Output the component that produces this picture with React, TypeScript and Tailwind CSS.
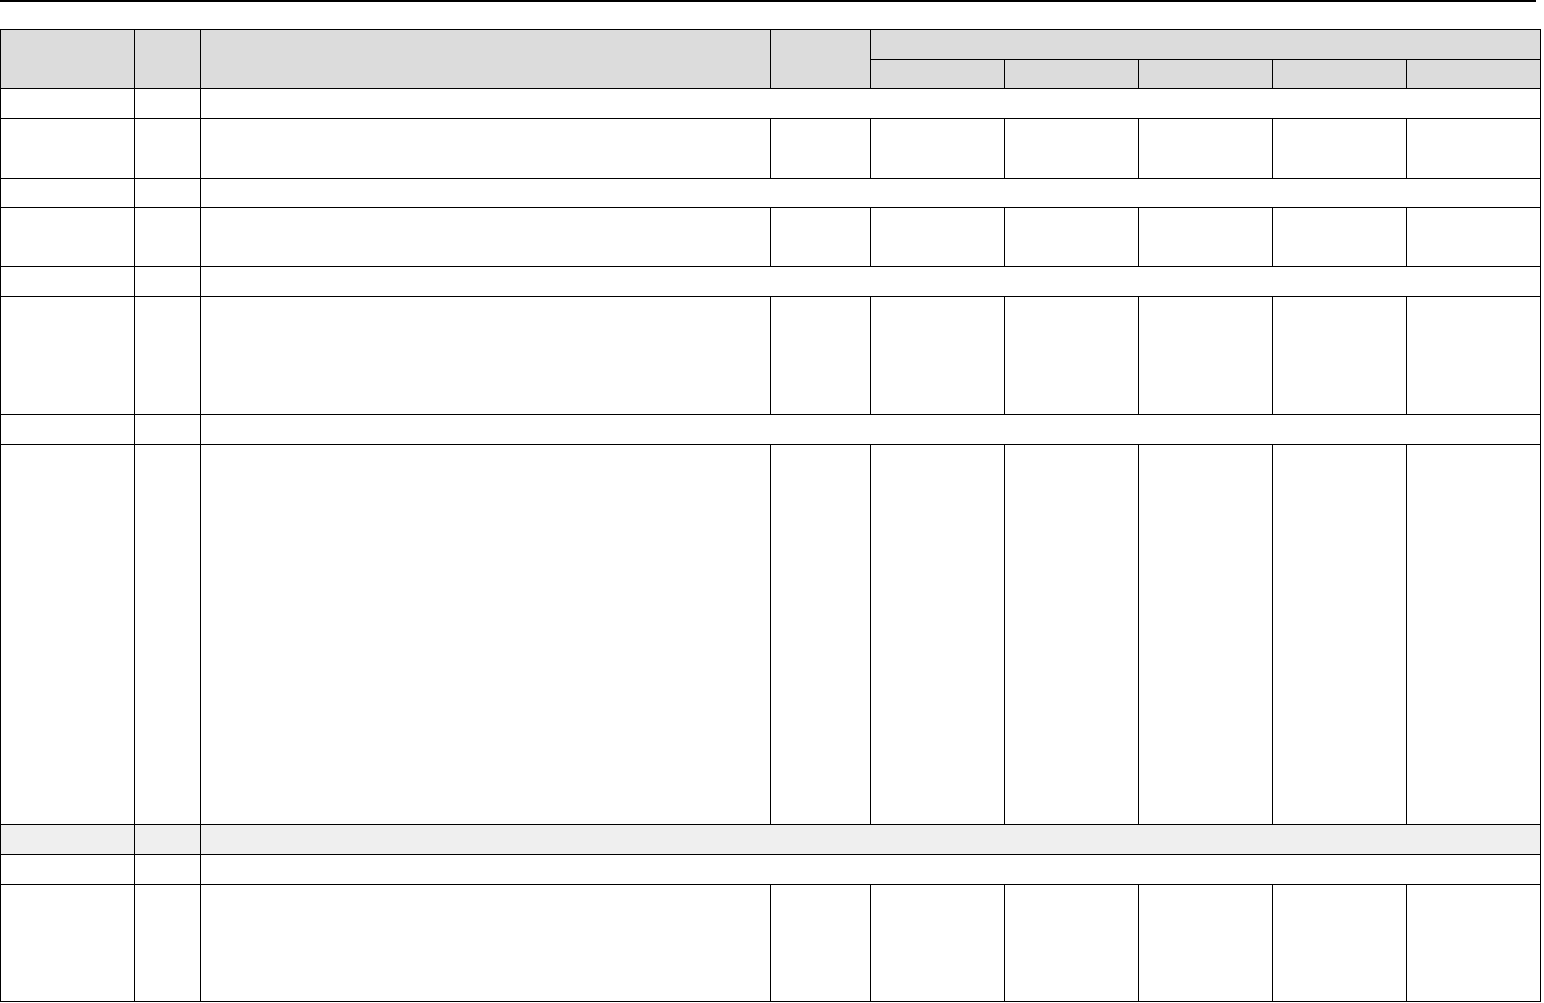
import React from "react";

type Row = { kind: "group" | "data"; h: string; shade?: boolean };

const rows: Row[] = [
  { kind: "group", h: "h-[30px]" },
  { kind: "data", h: "h-[60px]" },
  { kind: "group", h: "h-[29px]" },
  { kind: "data", h: "h-[59px]" },
  { kind: "group", h: "h-[30px]" },
  { kind: "data", h: "h-[118px]" },
  { kind: "group", h: "h-[30px]" },
  { kind: "data", h: "h-[380px]" },
  { kind: "group", h: "h-[30px]", shade: true },
  { kind: "group", h: "h-[30px]" },
  { kind: "data", h: "h-[117px]" },
];

const cell = "border-l border-t border-black";

export default function App() {
  return (
    <div className="w-[1544px] bg-white font-['Liberation_Sans',sans-serif]">
      <div className="h-[2px] w-[1536px] bg-black" />
      <div className="mt-[27px] grid w-[1541px] grid-cols-[134px_66px_570px_100px_134px_134px_134px_134px_134px] border-r border-b border-black">
        {/* header */}
        <div className={`${cell} row-span-2 bg-[#dcdcdc]`} />
        <div className={`${cell} row-span-2 bg-[#dcdcdc]`} />
        <div className={`${cell} row-span-2 bg-[#dcdcdc]`} />
        <div className={`${cell} row-span-2 bg-[#dcdcdc]`} />
        <div className={`${cell} col-span-5 h-[30px] bg-[#dcdcdc]`} />
        <div className={`${cell} h-[29px] bg-[#dcdcdc]`} />
        <div className={`${cell} h-[29px] bg-[#dcdcdc]`} />
        <div className={`${cell} h-[29px] bg-[#dcdcdc]`} />
        <div className={`${cell} h-[29px] bg-[#dcdcdc]`} />
        <div className={`${cell} h-[29px] bg-[#dcdcdc]`} />

        {rows.map((r, i) =>
          r.kind === "group" ? (
            <React.Fragment key={i}>
              <div className={`${cell} ${r.h} ${r.shade ? "bg-[#efefef]" : ""}`} />
              <div className={`${cell} ${r.h} ${r.shade ? "bg-[#efefef]" : ""}`} />
              <div className={`${cell} ${r.h} col-span-7 ${r.shade ? "bg-[#efefef]" : ""}`} />
            </React.Fragment>
          ) : (
            <React.Fragment key={i}>
              {Array.from({ length: 9 }).map((_, j) => (
                <div key={j} className={`${cell} ${r.h}`} />
              ))}
            </React.Fragment>
          )
        )}
      </div>
    </div>
  );
}
